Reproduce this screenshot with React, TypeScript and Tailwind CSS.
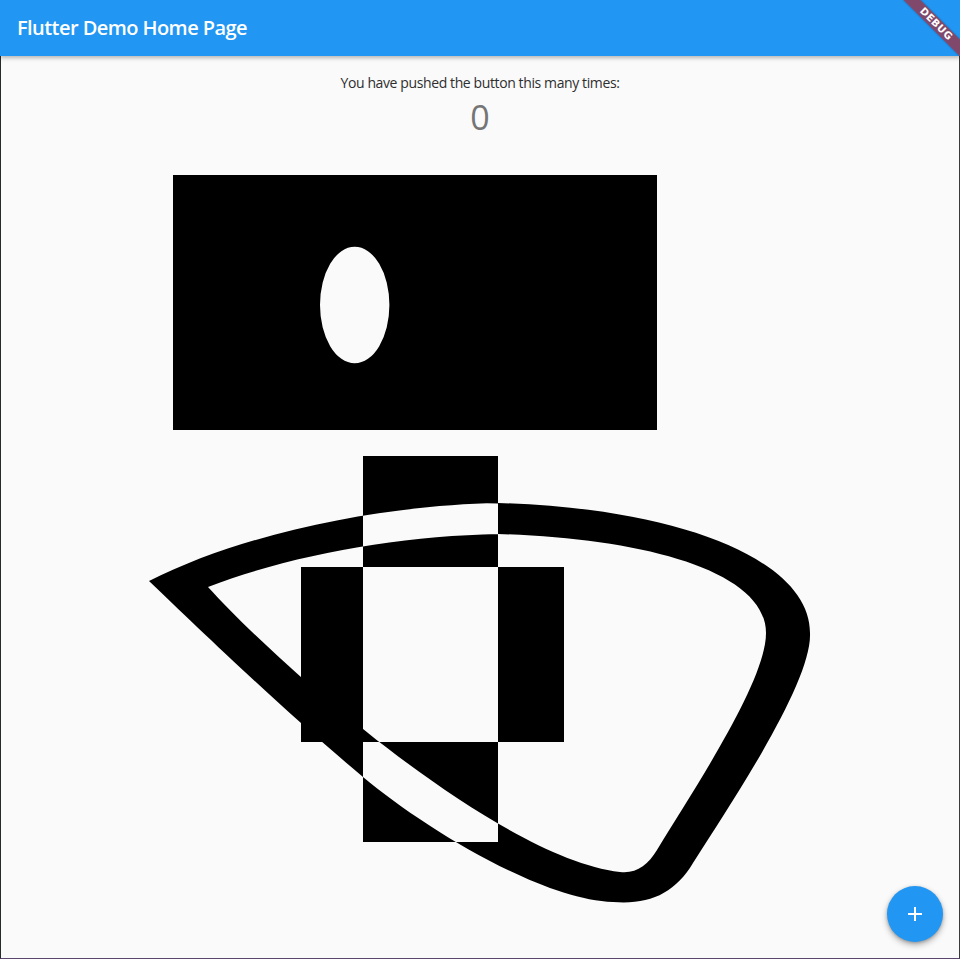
import React from "react";

function PlusIcon() {
  return (
    <svg width="24" height="24" viewBox="0 0 24 24" fill="white">
      <path d="M19 13h-6v6h-2v-6H5v-2h6V5h2v6h6v2z" />
    </svg>
  );
}

export default function App() {
  const outer =
    "M149 581 C250 530 390 505 498 503 C680 508 810 560 810 633 C812 680 740 790 693 863 C675 893 650 905 613 902 C540 900 420 825 363 777 C290 716 200 630 149 581 Z";
  const inner =
    "M208 587 C285 672 500 858 620 872 C636 874 648 865 657 850 C700 780 766 680 766 633 C766 570 640 538 498 534 C400 536 290 555 208 587 Z";
  const hRect = "M301 567 H564 V742 H301 Z";
  const vRect = "M363 456 V842 H498 V456 Z";
  const box =
    "M173 175 H657 V430 H173 Z M320 305 A34.7 58.3 0 1 0 389.4 305 A34.7 58.3 0 1 0 320 305 Z";

  return (
    <div
      className="relative w-[960px] h-[959px] overflow-hidden bg-[#fafafa] flex flex-col"
      style={{ fontFamily: '"Open Sans", "Noto Sans", sans-serif' }}
    >
      <header className="relative z-10 h-[56px] shrink-0 bg-[#2196F3] flex items-center pl-[17px] shadow-[0_2px_4px_rgba(0,0,0,0.28)]">
        <h1 className="text-white text-[20px] font-semibold leading-none tracking-[-0.56px]">
          Flutter Demo Home Page
        </h1>
      </header>

      <main className="flex-1 flex flex-col border-l border-r border-b border-l-[#252a2a] border-r-[#3a3a3a] border-b-[#5b4670]">
        <div className="h-[84px] shrink-0 flex flex-col items-center pt-[17px]">
          <p className="text-[14px] leading-[20px] text-[#2e2e2e] tracking-[-0.39px]">
            You have pushed the button this many times:
          </p>
          <p className="mt-[4px] text-[34px] leading-[40px] text-[#757575]">0</p>
        </div>
        <svg
          className="block shrink-0"
          width="958"
          height="818"
          viewBox="1 140 958 818"
        >
          <path d={box} fill="#000" fillRule="evenodd" />
          <path d={`${outer} ${inner} ${hRect} ${vRect}`} fill="#000" fillRule="nonzero" />
        </svg>
      </main>

      <button className="absolute right-[17px] bottom-[17px] w-[56px] h-[56px] rounded-full bg-[#2196F3] flex items-center justify-center shadow-[0_3px_6px_rgba(0,0,0,0.3),0_1px_3px_rgba(0,0,0,0.2)]">
        <PlusIcon />
      </button>

      <div className="absolute z-20 left-[896px] top-[18px] w-[80px] h-[12px] rotate-45 bg-[rgba(183,28,28,0.63)] flex items-center justify-center shadow-[0_0_2px_rgba(0,0,0,0.3)]">
        <span
          className="text-white text-[10px] font-black leading-none tracking-[0.5px]"
          style={{ fontFamily: '"DejaVu Sans", sans-serif' }}
        >
          DEBUG
        </span>
      </div>
    </div>
  );
}
